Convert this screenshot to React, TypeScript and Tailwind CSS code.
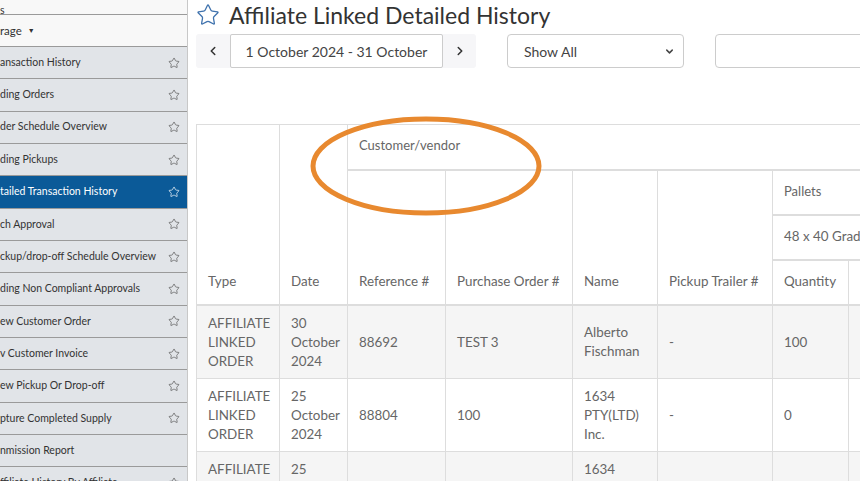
import React from "react";
import { Star, ChevronLeft, ChevronRight, ChevronDown } from "lucide-react";

const font = { fontFamily: "Lato, 'Noto Sans', sans-serif" };

const sideItems: { label: string; active?: boolean; star?: boolean }[] = [
  { label: "ansaction History", star: true },
  { label: "ding Orders", star: true },
  { label: "der Schedule Overview", star: true },
  { label: "ding Pickups", star: true },
  { label: "tailed Transaction History", star: true, active: true },
  { label: "ch Approval", star: true },
  { label: "ckup/drop-off Schedule Overview", star: true },
  { label: "ding Non Compliant Approvals", star: true },
  { label: "ew Customer Order", star: true },
  { label: "v Customer Invoice", star: true },
  { label: "ew Pickup Or Drop-off", star: true },
  { label: "pture Completed Supply", star: true },
  { label: "nmission Report", star: false },
  { label: "ffiliate History By Affiliate", star: true },
];

const rows = [
  { type: ["AFFILIATE", "LINKED", "ORDER"], date: ["30", "October", "2024"], ref: "88692", po: "TEST 3", name: ["Alberto", "Fischman"], trailer: "-", qty: "100", extra: ["S", "C"] },
  { type: ["AFFILIATE", "LINKED", "ORDER"], date: ["25", "October", "2024"], ref: "88804", po: "100", name: ["1634", "PTY(LTD)", "Inc."], trailer: "-", qty: "0", extra: [""] },
  { type: ["AFFILIATE", "LINKED", "ORDER"], date: ["25", "October", "2024"], ref: "88806", po: "100", name: ["1634", "PTY(LTD)", "Inc."], trailer: "-", qty: "0", extra: [""] },
];

const th = "border border-[#dddddd] border-b-2 px-[11px] align-bottom pb-[13px] pt-[10px] text-left font-normal leading-[20px] whitespace-nowrap overflow-hidden";
const td = "border border-[#dddddd] px-[11px] pt-[8px] pb-[7px] align-middle leading-[19px]";

export default function App() {
  return (
    <div className="relative flex w-[860px] h-[481px] overflow-hidden bg-white text-[#333]" style={font}>
      {/* Sidebar */}
      <div className="w-[188px] shrink-0 flex flex-col bg-[#e1e4e8] border-r border-[#c8c8c8] text-[10.5px]">
        <div className="h-[15px] shrink-0 bg-[#f8f8f8] border-b border-[#9a9a9a] flex items-end leading-[10px] overflow-hidden">
          <span className="pl-0 -mb-[1px]">s</span>
        </div>
        <div className="h-[32px] shrink-0 bg-[#f8f8f8] border-b border-[#9a9a9a] flex items-center gap-[6px] text-[11.5px]">
          <span>rage</span>
          <span className="text-[7px] text-[#333]">▼</span>
        </div>
        {sideItems.map((it, i) => (
          <div
            key={i}
            className={`h-[32.35px] shrink-0 flex items-center justify-between pr-[7px] border-b border-[#9a9a9a] ${
              it.active ? "bg-[#0b5a98] text-white" : "bg-[#e1e4e8] text-[#333]"
            }`}
          >
            <span className="whitespace-nowrap">{it.label}</span>
            {it.star && (
              <Star size={12} strokeWidth={1.4} className={`shrink-0 ${it.active ? "text-white" : "text-[#555]"}`} />
            )}
          </div>
        ))}
      </div>

      {/* Main */}
      <div className="flex-1 min-w-0 pl-[8px] overflow-hidden">
        <div className="flex items-center h-[28px] mt-[1px]">
          <Star size={24} strokeWidth={1.3} className="text-[#3f72ad] shrink-0" />
          <h1 className="ml-[9px] text-[23px] leading-[28px] text-[#333] whitespace-nowrap">Affiliate Linked Detailed History</h1>
        </div>

        <div className="flex items-center mt-[5px] h-[34px]">
          <div className="flex items-center h-[34px] w-[280px] shrink-0 bg-[#f6f6f8] rounded-[3px]">
            <div className="w-[34px] flex justify-center">
              <ChevronLeft size={14} strokeWidth={2.6} className="text-[#333]" />
            </div>
            <div className="w-[213px] h-[34px] bg-white border border-[#cccccc] rounded-[2px] flex items-center justify-center text-[14px] text-[#444]">
              1 October 2024 - 31 October
            </div>
            <div className="flex-1 flex justify-center">
              <ChevronRight size={14} strokeWidth={2.6} className="text-[#333]" />
            </div>
          </div>
          <div className="ml-[31px] w-[177px] shrink-0 h-[34px] border border-[#cccccc] rounded-[4px] flex items-center justify-between pl-[16px] pr-[8px] text-[14px] text-[#444]">
            <span>Show All</span>
            <ChevronDown size={11} strokeWidth={3.2} className="text-[#444]" />
          </div>
          <div className="ml-[31px] w-[200px] h-[34px] border border-[#cccccc] rounded-[4px] shrink-0" />
        </div>

        <div className="mt-[56px] overflow-hidden">
          <table className="table-fixed border-collapse text-[13.4px] text-[#666]" style={{ width: 780 }}>
            <colgroup>
              <col style={{ width: 83 }} />
              <col style={{ width: 68 }} />
              <col style={{ width: 98 }} />
              <col style={{ width: 127 }} />
              <col style={{ width: 85 }} />
              <col style={{ width: 115 }} />
              <col style={{ width: 76 }} />
              <col style={{ width: 128 }} />
            </colgroup>
            <thead>
              <tr className="h-[45px]">
                <th rowSpan={4} className={th}>Type</th>
                <th rowSpan={4} className={th}>Date</th>
                <th colSpan={6} className={`${th} align-middle py-0 text-[13px]`}>Customer/vendor</th>
              </tr>
              <tr className="h-[45px]">
                <th rowSpan={3} className={th}>Reference #</th>
                <th rowSpan={3} className={th}>Purchase Order #</th>
                <th rowSpan={3} className={th}>Name</th>
                <th rowSpan={3} className={th}>Pickup Trailer #</th>
                <th colSpan={2} className={`${th} align-middle py-0 text-[13px]`}>Pallets</th>
              </tr>
              <tr className="h-[45px]">
                <th colSpan={2} className={`${th} align-middle py-0`}>48 x 40 Grade A</th>
              </tr>
              <tr className="h-[45px]">
                <th className={`${th} align-middle py-0`}>Quantity</th>
                <th className={`${th} align-middle py-0`}>Total</th>
              </tr>
            </thead>
            <tbody>
              {rows.map((r, i) => (
                <tr key={i} className={i % 2 === 0 ? "bg-[#f5f5f5]" : "bg-white"}>
                  <td className={td}>{r.type.map((t, k) => <div key={k}>{t}</div>)}</td>
                  <td className={td}>{r.date.map((t, k) => <div key={k}>{t}</div>)}</td>
                  <td className={td}>{r.ref}</td>
                  <td className={td}>{r.po}</td>
                  <td className={td}>{r.name.map((t, k) => <div key={k}>{t}</div>)}</td>
                  <td className={td}>{r.trailer}</td>
                  <td className={td}>{r.qty}</td>
                  <td className={td}>{r.extra.map((t, k) => <div key={k}>{t}</div>)}</td>
                </tr>
              ))}
            </tbody>
          </table>
        </div>
      </div>

      {/* Annotation ellipse */}
      <svg className="absolute left-0 top-0 pointer-events-none" width={860} height={481}>
        <ellipse cx={426} cy={166} rx={113} ry={47} fill="none" stroke="#e8892f" strokeWidth={5} />
      </svg>
    </div>
  );
}
